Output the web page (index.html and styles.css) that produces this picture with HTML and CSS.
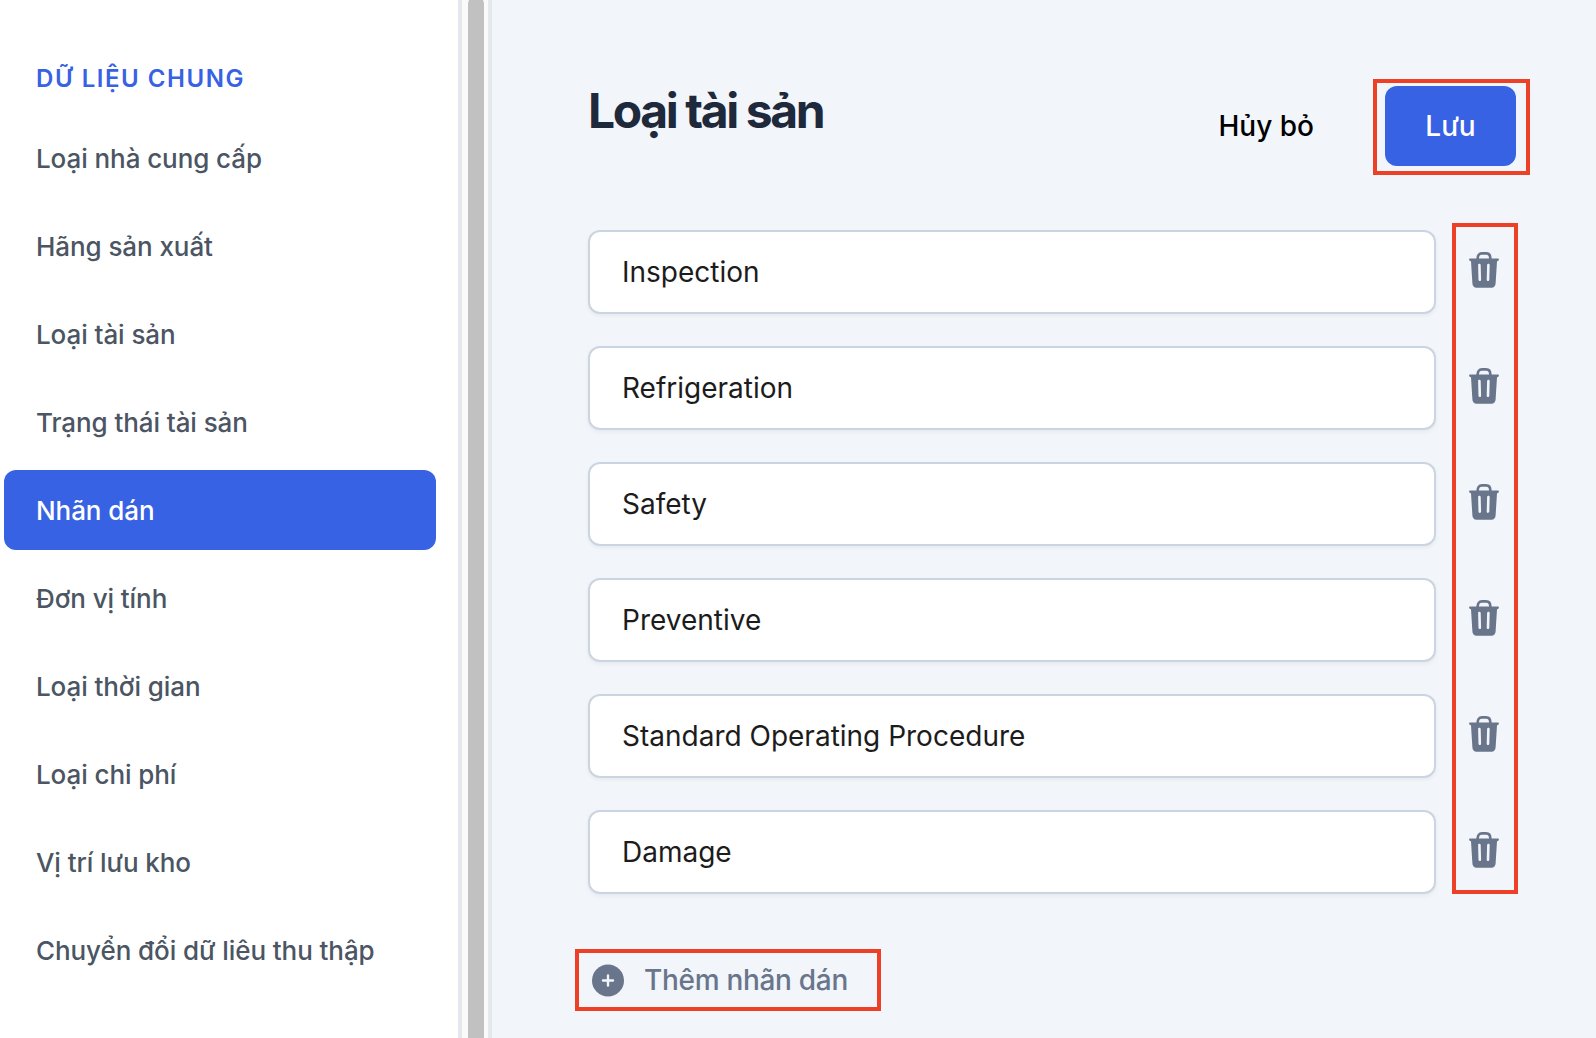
FILE: index.html
```html
<!DOCTYPE html>
<html lang="vi">
<head>
<meta charset="utf-8">
<title>Loại tài sản</title>
<link rel="stylesheet" href="styles.css">
</head>
<body>
<svg class="sprite" width="0" height="0">
  <symbol id="trash" viewBox="0 0 30 36">
    <path d="M8.7 7.4V6.2C8.7 3.3 10.2 1.4 12.8 1.4H17.2C19.8 1.4 21.3 3.3 21.3 6.2V7.4" fill="none" stroke="currentColor" stroke-width="2.6"/>
    <path fill="currentColor" fill-rule="evenodd" d="M1.2 6.5H28.8C30.2 6.5 30.3 8.4 29 8.9L28 9.2L26.6 31.6C26.4 34.2 24.9 35.8 22.5 35.8H7.5C5.1 35.8 3.6 34.2 3.4 31.6L2 9.2L1 8.9C-.3 8.4-.2 6.5 1.2 6.5ZM9.1 13 9.5 27.8C9.6 29.4 12.1 29.4 12.1 27.8L11.7 13C11.6 11.4 9.1 11.4 9.1 13ZM18.1 13 17.7 27.8C17.7 29.4 20.2 29.4 20.3 27.8L20.7 13C20.7 11.4 18.2 11.4 18.1 13Z"/>
  </symbol>
</svg>
<div class="app">
  <nav class="sidebar">
    <h2 class="sidebar-title">DỮ LIỆU CHUNG</h2>
    <ul class="menu">
      <li class="menu-item">Loại nhà cung cấp</li>
      <li class="menu-item">Hãng sản xuất</li>
      <li class="menu-item">Loại tài sản</li>
      <li class="menu-item">Trạng thái tài sản</li>
      <li class="menu-item active">Nhãn dán</li>
      <li class="menu-item">Đơn vị tính</li>
      <li class="menu-item">Loại thời gian</li>
      <li class="menu-item">Loại chi phí</li>
      <li class="menu-item">Vị trí lưu kho</li>
      <li class="menu-item">Chuyển đổi dữ liêu thu thập</li>
    </ul>
  </nav>
  <div class="scrollbar"><div class="thumb"></div></div>
  <main class="content">
    <header class="header">
      <h1 class="title">Loại tài sản</h1>
      <div class="actions">
        <button class="btn">Hủy bỏ</button>
        <div class="marked mark-save"><button class="btn primary">Lưu</button></div>
      </div>
    </header>
    <section class="labels">
      <div class="fields">
        <div class="field">Inspection</div>
        <div class="field">Refrigeration</div>
        <div class="field">Safety</div>
        <div class="field">Preventive</div>
        <div class="field">Standard Operating Procedure</div>
        <div class="field">Damage</div>
      </div>
      <div class="deletes marked mark-deletes">
        <svg class="trash"><use href="#trash"/></svg>
        <svg class="trash"><use href="#trash"/></svg>
        <svg class="trash"><use href="#trash"/></svg>
        <svg class="trash"><use href="#trash"/></svg>
        <svg class="trash"><use href="#trash"/></svg>
        <svg class="trash"><use href="#trash"/></svg>
      </div>
    </section>
    <div class="add marked">
      <svg class="plus" viewBox="0 0 33 33"><circle cx="17" cy="16.5" r="16" fill="currentColor"/><path d="M17 11.5V21.5M12 16.5H22" stroke="#f2f5fa" stroke-width="2.4" stroke-linecap="round"/></svg>
      <span class="add-text">Thêm nhãn dán</span>
    </div>
  </main>
</div>
</body>
</html>
```

FILE: styles.css
```css
* { box-sizing: border-box; }
body { margin: 0; font-family: Inter, "Noto Sans", sans-serif; overflow: hidden; }
.sprite { display: block; }
.app { display: flex; height: 1038px; background: #f2f5fa; }
.sidebar { flex: none; width: 458px; padding: 58px 22px 0 4px; background: #fff; }
.sidebar-title { margin: 0 0 20px; padding-left: 32px; font-size: 24px; line-height: 42px; height: 40px; font-weight: 600; letter-spacing: 1.55px; color: #3762e3; }
.menu { display: flex; flex-direction: column; gap: 8px; margin: 0; padding: 0; list-style: none; }
.menu-item { height: 80px; padding-left: 32px; border-radius: 12px; font-size: 26px; line-height: 82px; font-weight: 500; letter-spacing: -.08px; color: #4b5563; white-space: nowrap; }
.menu-item.active { background: #3762e3; color: #fff; }
.scrollbar { flex: none; display: flex; width: 34px; padding-left: 8px; border: 2px solid #e2e8f0; border-width: 0 2px; background: #fafafa; box-shadow: inset 2px 0 #e8e8e8, inset -2px 0 #e8e8e8; }
.thumb { width: 16px; margin: -4px 0 -12px; border-radius: 8px; background: #c1c1c1; }
.content { flex: 1; padding: 86px 78px 0 96px; }
.header { display: flex; justify-content: space-between; height: 144px; }
.title { margin: -3px 0 0; font-size: 48px; line-height: 56px; font-weight: 700; letter-spacing: -2.4px; color: #1e293b; }
.actions { display: flex; align-items: flex-start; gap: 32px; margin-right: 2px; }
.btn { display: block; height: 80px; padding: 0 40px; border: 0; border-radius: 12px; background: transparent; color: #000; font: 500 28px/80px Inter, "Noto Sans", sans-serif; }
.btn:first-child:not(.primary) { padding-right: 39px; }
.btn.primary { width: 131px; background: #3762e3; color: #fff; }
.marked { position: relative; }
.marked::after { content: ""; position: absolute; border: 4px solid #ec4126; }
.mark-save::after { inset: -7px -14px -9px -12px; }
.labels { display: flex; justify-content: space-between; }
.fields { display: flex; flex-direction: column; gap: 32px; width: 848px; }
.field { height: 84px; padding-left: 32px; border: 2px solid #cbd5e1; border-radius: 12px; background: #fff; box-shadow: 0 2px 4px rgba(0, 0, 0, .05); font-size: 28px; line-height: 80px; color: #1c1c1c; }
.deletes { display: flex; flex-direction: column; gap: 80px; width: 66px; padding: 22px 0 0 17px; color: #68758b; }
.mark-deletes::after { inset: -7px 0 0; }
.trash { width: 30px; height: 36px; }
.add { display: flex; align-items: center; gap: 20px; width: 306px; height: 62px; margin: 55px 0 0 -13px; padding-left: 16px; color: #68758b; }
.add::after { inset: 0; }
.plus { flex: none; width: 33px; height: 33px; }
.add-text { font-size: 28px; font-weight: 500; letter-spacing: -.3px; white-space: nowrap; }
```
